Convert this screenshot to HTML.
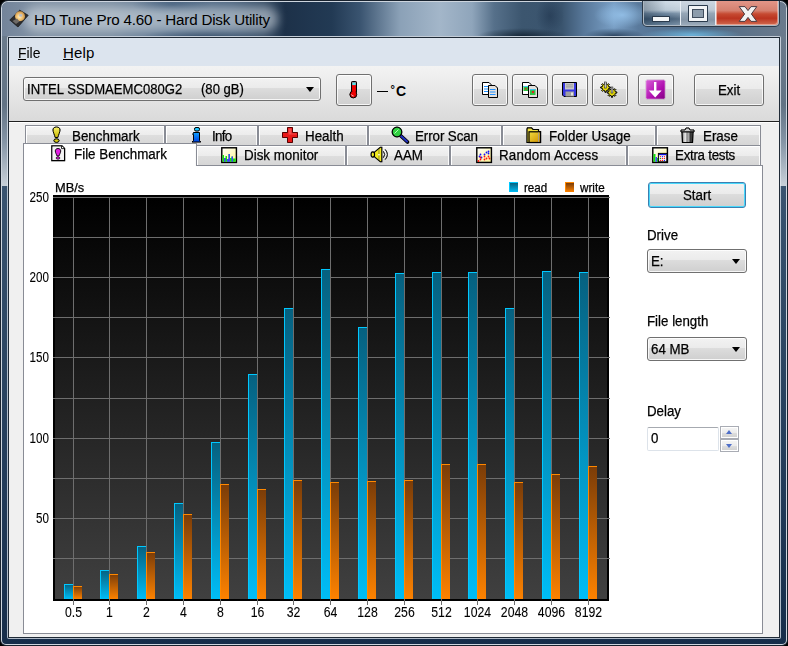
<!DOCTYPE html>
<html><head><meta charset="utf-8">
<style>
*{margin:0;padding:0;box-sizing:border-box}
html,body{width:788px;height:646px;overflow:hidden;background:#000}
body{position:relative;font-family:"Liberation Sans",sans-serif;color:#000}
.a{position:absolute}
.t{position:absolute;white-space:pre;line-height:1}
#frame{left:0;top:0;width:788px;height:646px;border-radius:7px 7px 0 0;
 background:
 linear-gradient(90deg,#8796a6 0px,#9aa8b6 40px,#a6b3c0 150px,#8e9fb0 250px,#4a6580 300px,#253d58 340px,#2f4a66 380px,#8ca6bf 430px,#98b0c7 460px,#5d7892 500px,#7992ab 540px,#9fbad3 580px,#6f8aa5 610px,#3d5878 640px,#2a4262 700px,#1c3452 788px);}
#glow{left:24px;top:7px;width:254px;height:24px;border-radius:12px;background:rgba(215,222,230,.55);filter:blur(5px)}
#client{left:9px;top:38px;width:770px;height:599px;background:#f0f0f0}
#menubar{left:9px;top:38px;width:770px;height:28px;background:#dce4ee}
#toolbar{left:9px;top:66px;width:770px;height:55px;background:linear-gradient(#f3f3f3,#dadada)}
#tbline{left:9px;top:121px;width:770px;height:1px;background:#202020}
.btn{position:absolute;border:1px solid #707070;border-radius:3px;
 background:linear-gradient(#f2f2f2 0%,#ebebeb 45%,#dddddd 45%,#cfcfcf 100%);
 box-shadow:inset 0 0 0 1px rgba(255,255,255,.8)}
.combo{position:absolute;border:1px solid #707070;border-radius:3px;
 background:linear-gradient(#f2f2f2 0%,#ebebeb 45%,#dddddd 45%,#cfcfcf 100%);
 box-shadow:inset 0 0 0 1px rgba(255,255,255,.8)}
.arrow{position:absolute;width:0;height:0;border-left:4.6px solid transparent;border-right:4.6px solid transparent;border-top:5.4px solid #000}
.tab{position:absolute;border:1px solid #898c95;border-bottom:none;box-shadow:inset 1px 1px 0 #fff,inset -1px 0 0 #fafafa;
 background:linear-gradient(#f4f4f4 0%,#ececec 50%,#dedede 50%,#d6d6d6 100%)}
.tt{position:absolute;white-space:pre;line-height:1;font-size:14px;color:#000;-webkit-text-stroke:0.25px #000;transform:scaleX(.955);transform-origin:0 0}
#panel{left:23px;top:165px;width:740px;height:469px;background:#fff;border:1px solid #898c95}
.lbl{position:absolute;white-space:pre;line-height:1;font-size:14px;-webkit-text-stroke:0.25px #000;transform:scaleX(.95);transform-origin:0 0}
</style></head><body>
<div class="a" style="left:0;top:0;width:788px;height:646px;border-radius:8px 8px 6px 6px;background:#18222e"></div>
<div class="a" style="left:1px;top:1px;width:786px;height:644px;border-radius:7px 7px 5px 5px;background:#cdd5de"></div>
<div class="a" style="left:2px;top:2px;width:784px;height:642px;border-radius:6px 6px 4px 4px;background:linear-gradient(#6f7f91 0px,#6a7a8b 40px,#627385 103px,#8595a6 140px,#c3ccd5 181px,#c8d0d8 184px,#3a5470 184px,#2e4864 330px,#213a58 500px,#162d4a 642px)"></div>
<div class="a" style="left:2px;top:2px;width:784px;height:34px;border-radius:6px 6px 0 0;background:
 radial-gradient(ellipse 28px 13px at 620px 13px,rgba(150,195,235,.85),rgba(150,195,235,0)),
 radial-gradient(ellipse 45px 8px at 520px 34px,rgba(15,30,45,.8),rgba(15,30,45,0)),
 radial-gradient(ellipse 50px 7px at 690px 33px,rgba(110,185,225,.9),rgba(110,185,225,0)),
 radial-gradient(ellipse 30px 8px at 612px 34px,rgba(20,40,65,.75),rgba(20,40,65,0)),
 radial-gradient(ellipse 14px 20px at 548px 14px,rgba(25,45,70,.5),rgba(25,45,70,0)),
 radial-gradient(ellipse 40px 10px at 170px 3px,rgba(30,60,95,.55),rgba(30,60,95,0)),
 radial-gradient(ellipse 60px 9px at 200px 35px,rgba(30,55,85,.6),rgba(30,55,85,0)),
 linear-gradient(90deg,#73849a 0px,#8394a6 40px,#7d8fa2 110px,#5d7690 170px,#4e6680 230px,#3a5068 262px,#1d3149 283px,#223a54 330px,#3a5470 358px,#8ba1b7 398px,#a3b6c9 438px,#8fa5bb 470px,#56708a 492px,#3c566f 520px,#3a546e 560px,#58789a 582px,#7aa0c6 612px,#5a7a9c 636px,#4f6a86 700px,#6a7a8c 784px)"></div>
<div id="glow" class="a"></div>
<div class="t" style="left:34px;top:11.5px;font-size:15.2px;letter-spacing:-0.2px;color:#000">HD Tune Pro 4.60 - Hard Disk Utility</div>
<div class="a" style="left:7px;top:36px;width:774px;height:603px;border-radius:2px;background:rgba(225,232,240,.75)"></div>
<div class="a" style="left:8px;top:37px;width:772px;height:601px;background:#1f2a36"></div>
<!-- caption buttons -->
<div class="a" style="left:642px;top:1px;width:138px;height:26px;border-radius:0 0 5px 5px;background:#2b3a4a"></div>
<div class="a" style="left:643px;top:1px;width:136px;height:25px;border-radius:0 0 4px 4px;background:rgba(230,238,246,.7)"></div>
<div class="a" style="left:644px;top:1px;width:36px;height:24px;border-radius:0 0 0 3px;background:linear-gradient(90deg,rgba(15,35,55,.3),rgba(15,35,55,0) 60%,rgba(255,255,255,.12)),linear-gradient(#cfdbe6 0%,#b9c8d5 38%,#7088a0 52%,#405a74 75%,#6a849c 100%)"></div>
<div class="a" style="left:681px;top:1px;width:34px;height:24px;background:linear-gradient(#ccd6e0 0%,#bcc8d4 38%,#95a6b6 52%,#8595a6 78%,#9cacbc 100%)"></div>
<div class="a" style="left:680px;top:1px;width:1px;height:24px;background:#e6edf4"></div>
<div class="a" style="left:715px;top:1px;width:1px;height:24px;background:#e6edf4"></div>
<div class="a" style="left:716px;top:1px;width:62px;height:24px;border-radius:0 0 3px 0;background:linear-gradient(#e29688 0%,#d5806f 40%,#c64a32 54%,#bb3420 72%,#d06a50 100%);box-shadow:inset 1px 0 0 rgba(255,225,215,.6),inset -1px -1px 0 rgba(255,225,215,.45)"></div>
<div class="a" style="left:652px;top:16px;width:18px;height:6px;background:#2a3a4c;border-radius:1px"></div>
<div class="a" style="left:653px;top:17px;width:16px;height:4px;background:#f4f6f8"></div>
<div class="a" style="left:688px;top:5px;width:20px;height:17px;background:#2a3a4c;border-radius:1px"></div>
<div class="a" style="left:689px;top:6px;width:18px;height:15px;border:3px solid #f2f4f6;background:#8d9cab"></div>
<div class="a" style="left:692px;top:9px;width:12px;height:9px;border:1px solid #404c5c"></div>
<svg class="a" style="left:736px;top:4px" width="24" height="20" viewBox="0 0 24 20"><path d="M3.2 2.6 L9 2.6 L12 6.6 L15 2.6 L20.8 2.6 L15.4 10 L20.8 17.4 L15 17.4 L12 13.4 L9 17.4 L3.2 17.4 L8.6 10 Z" fill="#f2f2f2" stroke="#4a3a40" stroke-width="1" stroke-linejoin="round"/></svg>
<div id="client" class="a"></div>
<div id="menubar" class="a"></div>
<div class="t" style="left:18px;top:45px;font-size:15px;transform:scaleX(.93);transform-origin:0 0">File</div>
<div class="a" style="left:18px;top:59px;width:8px;height:1px;background:#000"></div>
<div class="t" style="left:63px;top:45px;font-size:15px;letter-spacing:0.2px">Help</div>
<div class="a" style="left:63px;top:59px;width:10px;height:1px;background:#000"></div>
<div id="toolbar" class="a"></div>
<div id="tbline" class="a"></div>
<div class="a" style="left:9px;top:122px;width:770px;height:1px;background:#fff"></div>

<!-- drive combo -->
<div class="combo" style="left:23px;top:77px;width:298px;height:24px"></div>
<div class="lbl" style="left:27px;top:82px;font-size:14px;transform:scaleX(.935)">INTEL SSDMAEMC080G2</div>
<div class="lbl" style="left:201px;top:82px;font-size:14px;transform:scaleX(.935)">(80 gB)</div>
<div class="arrow" style="left:306px;top:87px"></div>

<!-- temp -->
<div class="btn" style="left:336px;top:74px;width:36px;height:32px"></div>
<div class="a" style="left:377px;top:91px;width:11px;height:1.2px;background:#000"></div>
<div class="t" style="left:390.5px;top:84px;font-size:11px;font-weight:bold">°</div>
<div class="t" style="left:396px;top:83.5px;font-size:14px;font-weight:bold">C</div>

<div class="btn" style="left:472px;top:74px;width:36px;height:32px"></div>
<div class="btn" style="left:512px;top:74px;width:36px;height:32px"></div>
<div class="btn" style="left:552px;top:74px;width:36px;height:32px"></div>
<div class="btn" style="left:592px;top:74px;width:36px;height:32px"></div>
<div class="btn" style="left:638px;top:74px;width:36px;height:32px"></div>
<div class="btn" style="left:694px;top:74px;width:70px;height:32px"></div>
<div class="lbl" style="left:718px;top:83px">Exit</div>

<!-- tabs -->
<div id="panel" class="a"></div>
<div class="tab" style="left:25px;top:125px;width:140px;height:20px"></div>
<div class="tab" style="left:165px;top:125px;width:93px;height:20px"></div>
<div class="tab" style="left:258px;top:125px;width:110px;height:20px"></div>
<div class="tab" style="left:368px;top:125px;width:134px;height:20px"></div>
<div class="tab" style="left:502px;top:125px;width:154px;height:20px"></div>
<div class="tab" style="left:656px;top:125px;width:105px;height:20px"></div>

<div class="tab" style="left:196px;top:145px;width:150px;height:20px"></div>
<div class="tab" style="left:346px;top:145px;width:104px;height:20px"></div>
<div class="tab" style="left:450px;top:145px;width:177px;height:20px"></div>
<div class="tab" style="left:627px;top:145px;width:134px;height:20px"></div>
<div class="tab" style="left:23px;top:143px;width:174px;height:23px;background:#fff"></div>

<div class="tt" style="left:72px;top:129.3px">Benchmark</div>
<div class="tt" style="left:212px;top:129.3px;letter-spacing:-0.7px">Info</div>
<div class="tt" style="left:305px;top:129.3px">Health</div>
<div class="tt" style="left:415px;top:129.3px;letter-spacing:-0.1px">Error Scan</div>
<div class="tt" style="left:549px;top:129.3px;letter-spacing:0.14px">Folder Usage</div>
<div class="tt" style="left:703px;top:129.3px">Erase</div>
<div class="tt" style="left:74px;top:147.3px">File Benchmark</div>
<div class="tt" style="left:244px;top:148.3px">Disk monitor</div>
<div class="tt" style="left:394px;top:148.3px">AAM</div>
<div class="tt" style="left:499px;top:148.3px;letter-spacing:0.22px">Random Access</div>
<div class="tt" style="left:675px;top:148.3px;letter-spacing:-0.3px">Extra tests</div>

<!-- right controls -->
<div class="btn" style="left:648px;top:182px;width:98px;height:26px;border-color:#3c7fb1;box-shadow:inset 0 0 0 1px #48d8fb"></div>
<div class="lbl" style="left:683px;top:188px">Start</div>
<div class="lbl" style="left:647px;top:228px">Drive</div>
<div class="combo" style="left:647px;top:249px;width:100px;height:24px"></div>
<div class="lbl" style="left:651px;top:254px">E:</div>
<div class="arrow" style="left:731.5px;top:259px"></div>
<div class="lbl" style="left:647px;top:314px">File length</div>
<div class="combo" style="left:647px;top:337px;width:100px;height:24px"></div>
<div class="lbl" style="left:651px;top:342px">64 MB</div>
<div class="arrow" style="left:731.5px;top:347px"></div>
<div class="lbl" style="left:647px;top:404px">Delay</div>
<div class="a" style="left:647px;top:427px;width:72px;height:24px;background:#fff;border:1px solid #dde3ea;border-top-color:#a6aab0;border-radius:2px"></div>
<div class="lbl" style="left:651px;top:431px">0</div>
<div class="a" style="left:720px;top:426px;width:19px;height:26px;background:#a9acb4"></div>
<div class="a" style="left:721px;top:427px;width:17px;height:11px;background:linear-gradient(#f4f4f4 0%,#ececec 50%,#dedede 55%,#d2d2d2 100%);border:1px solid #fff"></div>
<div class="a" style="left:721px;top:440px;width:17px;height:11px;background:linear-gradient(#f4f4f4 0%,#ececec 50%,#dedede 55%,#d2d2d2 100%);border:1px solid #fff"></div>
<div class="a" style="left:726px;top:430px;width:0;height:0;border-left:3.5px solid transparent;border-right:3.5px solid transparent;border-bottom:4px solid #4f6fc8"></div>
<div class="a" style="left:726px;top:444px;width:0;height:0;border-left:3.5px solid transparent;border-right:3.5px solid transparent;border-top:4px solid #4f6fc8"></div>



<!-- ICONS -->
<svg class="a" style="left:0;top:0;filter:drop-shadow(0.8px 0.8px 0.4px rgba(0,0,0,.35))" width="788" height="646">
<defs>
<linearGradient id="ylw" x1="0" y1="0" x2="0" y2="1"><stop offset="0" stop-color="#fbf36a"/><stop offset="1" stop-color="#c8b800"/></linearGradient>
<linearGradient id="blu" x1="0" y1="0" x2="0" y2="1"><stop offset="0" stop-color="#10a0ff"/><stop offset="1" stop-color="#0040e0"/></linearGradient>
<linearGradient id="pale" x1="0" y1="0" x2="1" y2="1"><stop offset="0" stop-color="#ffffff"/><stop offset="1" stop-color="#fdf590"/></linearGradient>
<linearGradient id="mag" x1="0" y1="0" x2="1" y2="1"><stop offset="0" stop-color="#d860d8"/><stop offset="0.6" stop-color="#b010b0"/><stop offset="1" stop-color="#800080"/></linearGradient>
<linearGradient id="fold" x1="0" y1="0" x2="1" y2="1"><stop offset="0" stop-color="#f0dc40"/><stop offset="1" stop-color="#d09000"/></linearGradient>
<linearGradient id="trash" x1="0" y1="0" x2="1" y2="0"><stop offset="0" stop-color="#777"/><stop offset="0.3" stop-color="#eee"/><stop offset="0.45" stop-color="#888"/><stop offset="0.6" stop-color="#aaa"/><stop offset="0.8" stop-color="#222"/><stop offset="1" stop-color="#777"/></linearGradient>
<radialGradient id="plat" cx="0.45" cy="0.55" r="0.6"><stop offset="0" stop-color="#fff0c0"/><stop offset="0.5" stop-color="#f0c070"/><stop offset="1" stop-color="#c08840"/></radialGradient>
</defs>
<!-- title HDD icon -->
<path d="M19.7 10.2 L28.2 15.3 L18 27 L9.8 20 Z" fill="#2c2c2e" stroke="#1a1a1a" stroke-width="0.6"/>
<circle cx="20" cy="16.3" r="5" fill="url(#plat)"/>
<rect x="19.2" y="14.2" width="3" height="2.4" fill="#b8bcc8"/>
<path d="M12.5 21 L17 18.5 L19.5 21.5 L16 24 Z" fill="#6e6a66"/>
<!-- Benchmark yellow ! -->
<path d="M56.5 127 C54 127 53 128.3 53 130 C53 132 54.6 135 55.2 137.5 L57.8 137.5 C58.4 135 60 132 60 130 C60 128.3 59 127 56.5 127 Z" fill="url(#ylw)" stroke="#000" stroke-width="1"/>
<ellipse cx="56.5" cy="140.6" rx="2.6" ry="1.8" fill="#d8cc10" stroke="#000" stroke-width="1"/>
<!-- Info i -->
<rect x="194.5" y="127.5" width="5" height="3.5" rx="1.5" fill="#20c8ff" stroke="#000" stroke-width="1"/>
<path d="M193.5 132.5 L199.5 132.5 L199.5 140.5 L200.8 142 L192 142 L193.5 140.5 L193.5 134.5 L192.8 134.5 Z" fill="url(#blu)" stroke="#000" stroke-width="1"/>
<!-- Health cross -->
<path d="M287.5 127.5 L292.5 127.5 L292.5 132.5 L297.5 132.5 L297.5 137.5 L292.5 137.5 L292.5 142.5 L287.5 142.5 L287.5 137.5 L282.5 137.5 L282.5 132.5 L287.5 132.5 Z" fill="#e81818" stroke="#500" stroke-width="1"/>
<path d="M288.5 128.5 L291.5 128.5 L291.5 133.5 L296.5 133.5 L296.5 134.5 L288.5 134.5 Z" fill="#ff7070" opacity=".6"/>
<!-- Error scan magnifier -->
<line x1="401" y1="136" x2="407.5" y2="142" stroke="#000" stroke-width="3.6" stroke-linecap="round"/>
<line x1="401" y1="136" x2="407" y2="141.5" stroke="#2030c0" stroke-width="2" stroke-linecap="round"/>
<circle cx="397" cy="132" r="4.8" fill="#30d040" stroke="#000" stroke-width="1.2"/>
<path d="M394.5 133.5 L398.5 129.5" stroke="#b0ffb0" stroke-width="1"/>
<!-- Folder -->
<path d="M527 129 L527.5 127.8 L531.5 127.8 L533 129.5 L538.5 129.5 L538.5 131.5 L540.5 131.5 L540.5 142.5 L527 142.5 Z" fill="#f0e040" stroke="#000" stroke-width="1.2"/>
<rect x="529" y="131.8" width="11.5" height="10.7" fill="url(#fold)" stroke="#000" stroke-width="1.2"/>
<rect x="538" y="132.5" width="0.8" height="9.5" fill="#a0a0a0"/>
<!-- Trash -->
<path d="M681 130 L685 130 L686 128 L689 128 L690 130 L694 130 L694 132 L681 132 Z" fill="#ccc" stroke="#000" stroke-width="1"/>
<path d="M682 132 L693 132 L692.5 142.5 L682.5 142.5 Z" fill="url(#trash)" stroke="#000" stroke-width="1.2"/>
<!-- File Benchmark doc -->
<path d="M51.8 145.8 L62 145.8 L64.6 148.4 L64.6 160.6 L51.8 160.6 Z" fill="#e8e8e8" stroke="#000" stroke-width="1.2"/>
<path d="M52.8 146.8 L61.5 146.8 L63.6 149 L63.6 159.6 L52.8 159.6 Z" fill="#f4f4f4"/>
<path d="M61.5 146 L61.5 148.6 L64.3 148.6" fill="#fff" stroke="#000" stroke-width="0.8"/>
<path d="M58 148.5 C56 148.5 55.3 149.8 55.3 151 C55.3 152.6 56.5 154.5 57 156 L59 156 C59.5 154.5 60.7 152.6 60.7 151 C60.7 149.8 60 148.5 58 148.5 Z" fill="#e020e0" stroke="#000" stroke-width=".9"/>
<ellipse cx="58" cy="158" rx="1.9" ry="1.2" fill="#e020e0" stroke="#000" stroke-width=".7"/>
<!-- Disk monitor -->
<rect x="221.8" y="147.8" width="14.6" height="14.6" fill="url(#pale)" stroke="#000" stroke-width="1.4"/>
<path d="M222.5 155 L224 155 L224 158 L225.5 158 L225.5 156 L227 156 L227 159 L228.5 159 L228.5 154 L230 154 L230 158 L231.5 158 L231.5 156.5 L233 156.5 L233 158.5 L235.7 158.5 L235.7 161.7 L222.5 161.7 Z" fill="#10e010"/>
<path d="M224 158 L225.5 158 L225.5 161.7 L224 161.7 Z M227 159 L228.5 159 L228.5 161.7 L227 161.7 Z M228.5 154 L230 154 L230 161.7 L228.5 161.7 Z M231.5 156.5 L233 156.5 L233 161.7 L231.5 161.7 Z" fill="#4040ff"/>
<!-- AAM speaker -->
<path d="M374.5 152.2 L380.3 147.3 L381.8 147.3 L381.8 161.7 L380.3 161.7 L374.5 156.8 Z" fill="#f4ec20" stroke="#000" stroke-width="1.1"/>
<ellipse cx="372.8" cy="154.5" rx="1.7" ry="2.6" fill="#f4ec20" stroke="#000" stroke-width="1.1"/>
<rect x="378.6" y="149" width="0.7" height="11" fill="#6a6a30"/>
<rect x="378.2" y="154" width="1.5" height="1.4" fill="#fff"/>
<path d="M383.4 151.3 Q386 154.5 383.4 157.7" fill="none" stroke="#111" stroke-width="1"/>
<path d="M385.2 149.4 Q389.6 154.5 385.2 159.6" fill="none" stroke="#111" stroke-width="1"/>
<!-- Random access -->
<rect x="476.8" y="147.8" width="14.6" height="14.6" fill="url(#pale)" stroke="#000" stroke-width="1.4"/>
<g fill="#1010ff"><circle cx="479.5" cy="156.5" r=".9"/><circle cx="480.5" cy="154.5" r=".9"/><circle cx="481.5" cy="157.5" r=".9"/><circle cx="484.5" cy="154.5" r=".9"/><circle cx="486.5" cy="152.5" r=".9"/><circle cx="488.5" cy="151.5" r=".9"/><circle cx="488.5" cy="153.5" r=".9"/></g>
<g fill="#ff1010"><circle cx="480.5" cy="157.5" r=".9"/><circle cx="480.5" cy="159.5" r=".9"/><circle cx="478.5" cy="161" r=".9"/><circle cx="484.5" cy="156.5" r=".9"/><circle cx="484.5" cy="159.5" r=".9"/><circle cx="486.5" cy="158.5" r=".9"/><circle cx="488.5" cy="156.5" r=".9"/><circle cx="489.5" cy="158.5" r=".9"/></g>
<!-- Extra tests -->
<rect x="652.8" y="147.8" width="14.6" height="14.6" fill="url(#pale)" stroke="#000" stroke-width="1.4"/>
<rect x="653.5" y="154" width="2" height="7.8" fill="#10e010"/><rect x="655.5" y="157" width="1.6" height="4.8" fill="#4040ff"/><rect x="657" y="158" width="1" height="3.8" fill="#10e010"/>
<rect x="658.4" y="153.4" width="8.4" height="8.4" fill="#f4f4f4" stroke="#000" stroke-width="1"/>
<rect x="659" y="154" width="7.4" height="1.2" fill="#1010e0"/>
<g fill="#ff1010"><circle cx="660.4" cy="156.6" r=".65"/><circle cx="664.4" cy="156.6" r=".65"/><circle cx="662.4" cy="158.4" r=".65"/><circle cx="664.4" cy="158.4" r=".65"/><circle cx="660.4" cy="160.4" r=".65"/><circle cx="662.4" cy="160.4" r=".65"/></g>
<circle cx="662.4" cy="156.6" r=".65" fill="#1010ff"/><circle cx="664.4" cy="160.4" r=".65" fill="#1010ff"/><circle cx="660.4" cy="158.4" r=".65" fill="#10a010"/>
<!-- Thermometer -->
<rect x="351.5" y="81.5" width="5" height="12" rx="1" fill="#e00000" stroke="#000" stroke-width="1"/>
<rect x="352.2" y="82.2" width="3.6" height="2.6" fill="#40e0f0"/>
<circle cx="353.3" cy="94.5" r="3.4" fill="#e00000" stroke="#000" stroke-width="1"/>
<rect x="352.3" y="82.5" width="3.4" height="12.5" fill="#f00000"/><rect x="352.3" y="82.5" width="3.4" height="2.6" fill="#50e8f0"/>
<path d="M351.5 94.5 Q352.2 96.2 353.6 96" stroke="#fff" stroke-width=".8" fill="none"/>
<!-- copy icon -->
<path d="M482.5 82.5 L489 82.5 L491 84.5 L491 94.5 L482.5 94.5 Z" fill="#fff" stroke="#000" stroke-width="1"/>
<g fill="#2090ff"><rect x="484" y="86" width="4" height="1"/><rect x="484" y="88.5" width="4" height="1"/><rect x="484" y="91" width="4" height="1"/></g>
<path d="M488.5 85.5 L495 85.5 L497.5 88 L497.5 97.5 L488.5 97.5 Z" fill="#e4e0dc" stroke="#000" stroke-width="1"/>
<g fill="#2090ff"><rect x="490" y="89" width="5.5" height="1"/><rect x="490" y="91.5" width="5.5" height="1"/><rect x="490" y="94" width="5.5" height="1"/></g>
<!-- copy image icon -->
<path d="M522.5 82.5 L529 82.5 L531 84.5 L531 94.5 L522.5 94.5 Z" fill="#fff" stroke="#000" stroke-width="1"/>
<rect x="523.5" y="86" width="4.5" height="5" fill="#30c040"/><rect x="523.5" y="86" width="4.5" height="1" fill="#40c0f0"/><rect x="525" y="88" width="1.5" height="1.5" fill="#e02020"/>
<path d="M528.5 85.5 L535 85.5 L537.5 88 L537.5 97.5 L528.5 97.5 Z" fill="#e4e0dc" stroke="#000" stroke-width="1"/>
<rect x="530" y="89" width="5.5" height="6" fill="#30c040"/><rect x="530" y="89" width="5.5" height="1.2" fill="#40c0f0"/><rect x="532" y="91" width="2" height="2" fill="#e02020"/>
<!-- floppy -->
<path d="M562.5 82.5 L576.5 82.5 L576.5 96.5 L564 96.5 L562.5 95 Z" fill="#3838e0" stroke="#000" stroke-width="1"/>
<rect x="565" y="83" width="9" height="6.5" fill="#c8c8c8"/>
<g fill="#909090"><rect x="566" y="84.5" width="7" height=".8"/><rect x="566" y="86.5" width="7" height=".8"/></g>
<rect x="565.5" y="91.5" width="8.5" height="5" fill="#a0a0a0"/><rect x="571" y="92.5" width="2" height="3" fill="#e0e0e0"/>
<!-- gears -->
<path d="M608.83 86.84 L610.27 86.94 L610.27 88.06 L608.83 88.16 L608.33 89.39 L609.27 90.47 L608.47 91.27 L607.39 90.33 L606.16 90.83 L606.06 92.27 L604.94 92.27 L604.84 90.83 L603.61 90.33 L602.53 91.27 L601.73 90.47 L602.67 89.39 L602.17 88.16 L600.73 88.06 L600.73 86.94 L602.17 86.84 L602.67 85.61 L601.73 84.53 L602.53 83.73 L603.61 84.67 L604.84 84.17 L604.94 82.73 L606.06 82.73 L606.16 84.17 L607.39 84.67 L608.47 83.73 L609.27 84.53 L608.33 85.61 Z" fill="#e8dc10" stroke="#000" stroke-width="1"/>
<path d="M615.33 91.84 L616.77 91.94 L616.77 93.06 L615.33 93.16 L614.83 94.39 L615.77 95.47 L614.97 96.27 L613.89 95.33 L612.66 95.83 L612.56 97.27 L611.44 97.27 L611.34 95.83 L610.11 95.33 L609.03 96.27 L608.23 95.47 L609.17 94.39 L608.67 93.16 L607.23 93.06 L607.23 91.94 L608.67 91.84 L609.17 90.61 L608.23 89.53 L609.03 88.73 L610.11 89.67 L611.34 89.17 L611.44 87.73 L612.56 87.73 L612.66 89.17 L613.89 89.67 L614.97 88.73 L615.77 89.53 L614.83 90.61 Z" fill="#e8dc10" stroke="#000" stroke-width="1"/>
<circle cx="605.5" cy="87.5" r="1.6" fill="#c8bc00"/><circle cx="612" cy="92.5" r="1.6" fill="#c8bc00"/>
<rect x="604.6" y="82" width="1.8" height="6" fill="#c0c0c0" stroke="#333" stroke-width=".5"/>
<rect x="611.1" y="87" width="1.8" height="6" fill="#c0c0c0" stroke="#333" stroke-width=".5"/>
<!-- magenta down -->
<rect x="645.8" y="79.8" width="19.4" height="19.4" rx="1.5" fill="url(#mag)" stroke="#fff" stroke-width=".6"/>
<path d="M654 82 L656.4 82 L656.4 90.6 L661.6 90.6 L655.2 97.4 L648.8 90.6 L654 90.6 Z" fill="#fff"/>
</svg>

<!-- chart -->
<div id="chart"><svg class="a" style="left:0;top:0" width="788" height="646" shape-rendering="crispEdges">
<defs>
<linearGradient id="bg" x1="0" y1="0" x2="0" y2="1"><stop offset="0" stop-color="#000"/><stop offset="1" stop-color="#404040"/></linearGradient>
<linearGradient id="rg" x1="0" y1="0" x2="0" y2="1"><stop offset="0" stop-color="#06607f"/><stop offset="1" stop-color="#00bdf6"/></linearGradient>
<linearGradient id="wg" x1="0" y1="0" x2="0" y2="1"><stop offset="0" stop-color="#7a3c08"/><stop offset="1" stop-color="#fd8200"/></linearGradient>
</defs>
<rect x="53" y="195" width="556" height="406" fill="#000"/>
<rect x="55" y="197" width="552" height="402" fill="url(#bg)"/>
<rect x="53" y="558" width="557" height="1" fill="#6e6e6e"/>
<rect x="53" y="518" width="557" height="1" fill="#6e6e6e"/>
<rect x="53" y="478" width="557" height="1" fill="#6e6e6e"/>
<rect x="53" y="438" width="557" height="1" fill="#6e6e6e"/>
<rect x="53" y="398" width="557" height="1" fill="#6e6e6e"/>
<rect x="53" y="357" width="557" height="1" fill="#6e6e6e"/>
<rect x="53" y="317" width="557" height="1" fill="#6e6e6e"/>
<rect x="53" y="277" width="557" height="1" fill="#6e6e6e"/>
<rect x="53" y="237" width="557" height="1" fill="#6e6e6e"/>
<rect x="53" y="197" width="557" height="1" fill="#6e6e6e"/>
<rect x="73" y="197" width="1" height="408" fill="#6e6e6e"/>
<rect x="109" y="197" width="1" height="408" fill="#6e6e6e"/>
<rect x="146" y="197" width="1" height="408" fill="#6e6e6e"/>
<rect x="183" y="197" width="1" height="408" fill="#6e6e6e"/>
<rect x="220" y="197" width="1" height="408" fill="#6e6e6e"/>
<rect x="257" y="197" width="1" height="408" fill="#6e6e6e"/>
<rect x="293" y="197" width="1" height="408" fill="#6e6e6e"/>
<rect x="330" y="197" width="1" height="408" fill="#6e6e6e"/>
<rect x="367" y="197" width="1" height="408" fill="#6e6e6e"/>
<rect x="404" y="197" width="1" height="408" fill="#6e6e6e"/>
<rect x="441" y="197" width="1" height="408" fill="#6e6e6e"/>
<rect x="477" y="197" width="1" height="408" fill="#6e6e6e"/>
<rect x="514" y="197" width="1" height="408" fill="#6e6e6e"/>
<rect x="551" y="197" width="1" height="408" fill="#6e6e6e"/>
<rect x="588" y="197" width="1" height="408" fill="#6e6e6e"/>
<rect x="64" y="584" width="9" height="15" fill="url(#rg)"/>
<rect x="64" y="584" width="1" height="15" fill="#00c8ff"/>
<rect x="64" y="584" width="9" height="1" fill="#00c8ff"/>
<rect x="73" y="586" width="9" height="13" fill="url(#wg)"/>
<rect x="73" y="586" width="1" height="13" fill="#ff8800"/>
<rect x="73" y="586" width="9" height="1" fill="#ff8800"/>
<rect x="100" y="570" width="9" height="29" fill="url(#rg)"/>
<rect x="100" y="570" width="1" height="29" fill="#00c8ff"/>
<rect x="100" y="570" width="9" height="1" fill="#00c8ff"/>
<rect x="109" y="574" width="9" height="25" fill="url(#wg)"/>
<rect x="109" y="574" width="1" height="25" fill="#ff8800"/>
<rect x="109" y="574" width="9" height="1" fill="#ff8800"/>
<rect x="137" y="546" width="9" height="53" fill="url(#rg)"/>
<rect x="137" y="546" width="1" height="53" fill="#00c8ff"/>
<rect x="137" y="546" width="9" height="1" fill="#00c8ff"/>
<rect x="146" y="552" width="9" height="47" fill="url(#wg)"/>
<rect x="146" y="552" width="1" height="47" fill="#ff8800"/>
<rect x="146" y="552" width="9" height="1" fill="#ff8800"/>
<rect x="174" y="503" width="9" height="96" fill="url(#rg)"/>
<rect x="174" y="503" width="1" height="96" fill="#00c8ff"/>
<rect x="174" y="503" width="9" height="1" fill="#00c8ff"/>
<rect x="183" y="514" width="9" height="85" fill="url(#wg)"/>
<rect x="183" y="514" width="1" height="85" fill="#ff8800"/>
<rect x="183" y="514" width="9" height="1" fill="#ff8800"/>
<rect x="211" y="442" width="9" height="157" fill="url(#rg)"/>
<rect x="211" y="442" width="1" height="157" fill="#00c8ff"/>
<rect x="211" y="442" width="9" height="1" fill="#00c8ff"/>
<rect x="220" y="484" width="9" height="115" fill="url(#wg)"/>
<rect x="220" y="484" width="1" height="115" fill="#ff8800"/>
<rect x="220" y="484" width="9" height="1" fill="#ff8800"/>
<rect x="248" y="374" width="9" height="225" fill="url(#rg)"/>
<rect x="248" y="374" width="1" height="225" fill="#00c8ff"/>
<rect x="248" y="374" width="9" height="1" fill="#00c8ff"/>
<rect x="257" y="489" width="9" height="110" fill="url(#wg)"/>
<rect x="257" y="489" width="1" height="110" fill="#ff8800"/>
<rect x="257" y="489" width="9" height="1" fill="#ff8800"/>
<rect x="284" y="308" width="9" height="291" fill="url(#rg)"/>
<rect x="284" y="308" width="1" height="291" fill="#00c8ff"/>
<rect x="284" y="308" width="9" height="1" fill="#00c8ff"/>
<rect x="293" y="480" width="9" height="119" fill="url(#wg)"/>
<rect x="293" y="480" width="1" height="119" fill="#ff8800"/>
<rect x="293" y="480" width="9" height="1" fill="#ff8800"/>
<rect x="321" y="269" width="9" height="330" fill="url(#rg)"/>
<rect x="321" y="269" width="1" height="330" fill="#00c8ff"/>
<rect x="321" y="269" width="9" height="1" fill="#00c8ff"/>
<rect x="330" y="482" width="9" height="117" fill="url(#wg)"/>
<rect x="330" y="482" width="1" height="117" fill="#ff8800"/>
<rect x="330" y="482" width="9" height="1" fill="#ff8800"/>
<rect x="358" y="327" width="9" height="272" fill="url(#rg)"/>
<rect x="358" y="327" width="1" height="272" fill="#00c8ff"/>
<rect x="358" y="327" width="9" height="1" fill="#00c8ff"/>
<rect x="367" y="481" width="9" height="118" fill="url(#wg)"/>
<rect x="367" y="481" width="1" height="118" fill="#ff8800"/>
<rect x="367" y="481" width="9" height="1" fill="#ff8800"/>
<rect x="395" y="273" width="9" height="326" fill="url(#rg)"/>
<rect x="395" y="273" width="1" height="326" fill="#00c8ff"/>
<rect x="395" y="273" width="9" height="1" fill="#00c8ff"/>
<rect x="404" y="480" width="9" height="119" fill="url(#wg)"/>
<rect x="404" y="480" width="1" height="119" fill="#ff8800"/>
<rect x="404" y="480" width="9" height="1" fill="#ff8800"/>
<rect x="432" y="272" width="9" height="327" fill="url(#rg)"/>
<rect x="432" y="272" width="1" height="327" fill="#00c8ff"/>
<rect x="432" y="272" width="9" height="1" fill="#00c8ff"/>
<rect x="441" y="464" width="9" height="135" fill="url(#wg)"/>
<rect x="441" y="464" width="1" height="135" fill="#ff8800"/>
<rect x="441" y="464" width="9" height="1" fill="#ff8800"/>
<rect x="468" y="272" width="9" height="327" fill="url(#rg)"/>
<rect x="468" y="272" width="1" height="327" fill="#00c8ff"/>
<rect x="468" y="272" width="9" height="1" fill="#00c8ff"/>
<rect x="477" y="464" width="9" height="135" fill="url(#wg)"/>
<rect x="477" y="464" width="1" height="135" fill="#ff8800"/>
<rect x="477" y="464" width="9" height="1" fill="#ff8800"/>
<rect x="505" y="308" width="9" height="291" fill="url(#rg)"/>
<rect x="505" y="308" width="1" height="291" fill="#00c8ff"/>
<rect x="505" y="308" width="9" height="1" fill="#00c8ff"/>
<rect x="514" y="482" width="9" height="117" fill="url(#wg)"/>
<rect x="514" y="482" width="1" height="117" fill="#ff8800"/>
<rect x="514" y="482" width="9" height="1" fill="#ff8800"/>
<rect x="542" y="271" width="9" height="328" fill="url(#rg)"/>
<rect x="542" y="271" width="1" height="328" fill="#00c8ff"/>
<rect x="542" y="271" width="9" height="1" fill="#00c8ff"/>
<rect x="551" y="474" width="9" height="125" fill="url(#wg)"/>
<rect x="551" y="474" width="1" height="125" fill="#ff8800"/>
<rect x="551" y="474" width="9" height="1" fill="#ff8800"/>
<rect x="579" y="272" width="9" height="327" fill="url(#rg)"/>
<rect x="579" y="272" width="1" height="327" fill="#00c8ff"/>
<rect x="579" y="272" width="9" height="1" fill="#00c8ff"/>
<rect x="588" y="466" width="9" height="133" fill="url(#wg)"/>
<rect x="588" y="466" width="1" height="133" fill="#ff8800"/>
<rect x="588" y="466" width="9" height="1" fill="#ff8800"/>
</svg>
<div class="lbl" style="left:33px;width:81px;text-align:center;top:605px;font-size:14px;-webkit-text-stroke:0.1px #000;transform:scaleX(0.875);transform-origin:40.5px 0">0.5</div>
<div class="lbl" style="left:69px;width:81px;text-align:center;top:605px;font-size:14px;-webkit-text-stroke:0.1px #000;transform:scaleX(0.875);transform-origin:40.5px 0">1</div>
<div class="lbl" style="left:106px;width:81px;text-align:center;top:605px;font-size:14px;-webkit-text-stroke:0.1px #000;transform:scaleX(0.875);transform-origin:40.5px 0">2</div>
<div class="lbl" style="left:143px;width:81px;text-align:center;top:605px;font-size:14px;-webkit-text-stroke:0.1px #000;transform:scaleX(0.875);transform-origin:40.5px 0">4</div>
<div class="lbl" style="left:180px;width:81px;text-align:center;top:605px;font-size:14px;-webkit-text-stroke:0.1px #000;transform:scaleX(0.875);transform-origin:40.5px 0">8</div>
<div class="lbl" style="left:217px;width:81px;text-align:center;top:605px;font-size:14px;-webkit-text-stroke:0.1px #000;transform:scaleX(0.875);transform-origin:40.5px 0">16</div>
<div class="lbl" style="left:253px;width:81px;text-align:center;top:605px;font-size:14px;-webkit-text-stroke:0.1px #000;transform:scaleX(0.875);transform-origin:40.5px 0">32</div>
<div class="lbl" style="left:290px;width:81px;text-align:center;top:605px;font-size:14px;-webkit-text-stroke:0.1px #000;transform:scaleX(0.875);transform-origin:40.5px 0">64</div>
<div class="lbl" style="left:327px;width:81px;text-align:center;top:605px;font-size:14px;-webkit-text-stroke:0.1px #000;transform:scaleX(0.875);transform-origin:40.5px 0">128</div>
<div class="lbl" style="left:364px;width:81px;text-align:center;top:605px;font-size:14px;-webkit-text-stroke:0.1px #000;transform:scaleX(0.875);transform-origin:40.5px 0">256</div>
<div class="lbl" style="left:401px;width:81px;text-align:center;top:605px;font-size:14px;-webkit-text-stroke:0.1px #000;transform:scaleX(0.875);transform-origin:40.5px 0">512</div>
<div class="lbl" style="left:437px;width:81px;text-align:center;top:605px;font-size:14px;-webkit-text-stroke:0.1px #000;transform:scaleX(0.875);transform-origin:40.5px 0">1024</div>
<div class="lbl" style="left:474px;width:81px;text-align:center;top:605px;font-size:14px;-webkit-text-stroke:0.1px #000;transform:scaleX(0.875);transform-origin:40.5px 0">2048</div>
<div class="lbl" style="left:511px;width:81px;text-align:center;top:605px;font-size:14px;-webkit-text-stroke:0.1px #000;transform:scaleX(0.875);transform-origin:40.5px 0">4096</div>
<div class="lbl" style="left:548px;width:81px;text-align:center;top:605px;font-size:14px;-webkit-text-stroke:0.1px #000;transform:scaleX(0.875);transform-origin:40.5px 0">8192</div>
<div class="lbl" style="left:-0.6px;width:50px;text-align:right;top:190px;font-size:14px;-webkit-text-stroke:0.1px #000;transform:scaleX(0.83);transform-origin:100% 0">250</div>
<div class="lbl" style="left:-0.6px;width:50px;text-align:right;top:270px;font-size:14px;-webkit-text-stroke:0.1px #000;transform:scaleX(0.83);transform-origin:100% 0">200</div>
<div class="lbl" style="left:-0.6px;width:50px;text-align:right;top:350px;font-size:14px;-webkit-text-stroke:0.1px #000;transform:scaleX(0.83);transform-origin:100% 0">150</div>
<div class="lbl" style="left:-0.6px;width:50px;text-align:right;top:431px;font-size:14px;-webkit-text-stroke:0.1px #000;transform:scaleX(0.83);transform-origin:100% 0">100</div>
<div class="lbl" style="left:-0.6px;width:50px;text-align:right;top:511px;font-size:14px;-webkit-text-stroke:0.1px #000;transform:scaleX(0.83);transform-origin:100% 0">50</div>
<div class="lbl" style="left:55px;top:180.5px;font-size:13.5px">MB/s</div>
<div class="a" style="left:509px;top:182px;width:9px;height:10px;background:linear-gradient(#06607f,#00bdf6);border-left:1px solid #00c8ff;border-top:1px solid #00c8ff"></div>
<div class="lbl" style="left:523.5px;top:182px;font-size:12.2px">read</div>
<div class="a" style="left:565px;top:182px;width:9px;height:10px;background:linear-gradient(#7a3c08,#fd8200);border-left:1px solid #ff8800;border-top:1px solid #ff8800"></div>
<div class="lbl" style="left:579.5px;top:182px;font-size:12.3px">write</div></div><!--endchart-->
</body></html>
